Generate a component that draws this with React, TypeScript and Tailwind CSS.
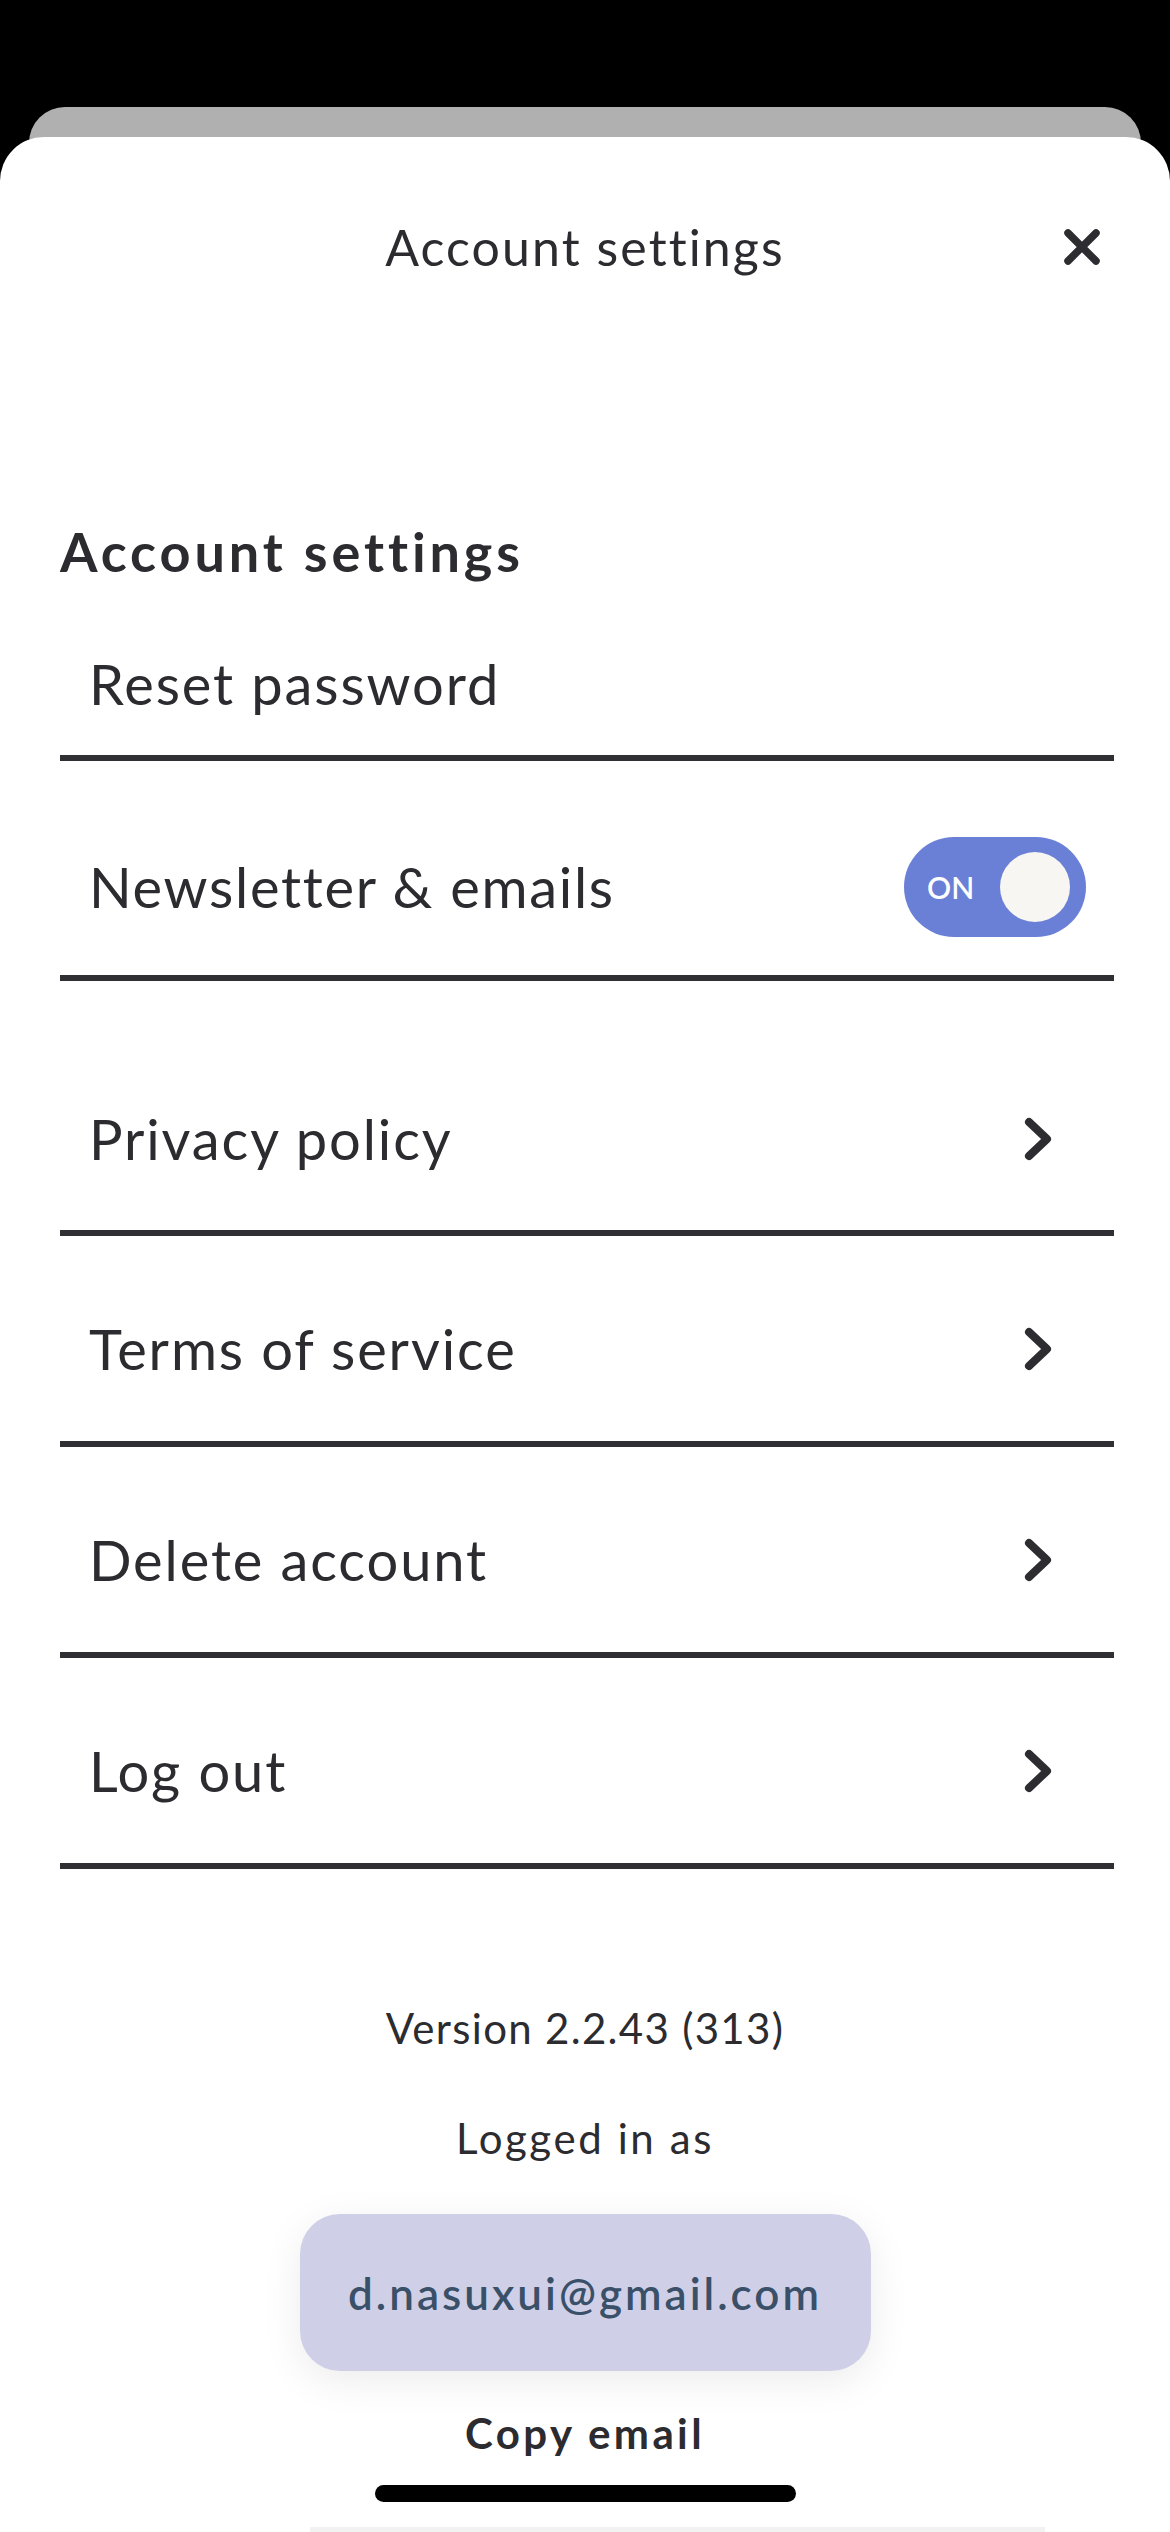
import React from "react";

function Chevron() {
  return (
    <svg width="28" height="44" viewBox="0 0 28 44" fill="none">
      <polyline
        points="5,5 23,22 5,39"
        stroke="#2c2c31"
        strokeWidth="8"
        strokeLinecap="round"
        strokeLinejoin="round"
      />
    </svg>
  );
}

function CloseIcon() {
  return (
    <svg width="40" height="40" viewBox="0 0 40 40" fill="none">
      <path d="M6 6 L34 34 M34 6 L6 34" stroke="#2c2c31" strokeWidth="7.5" strokeLinecap="round" />
    </svg>
  );
}

function Toggle() {
  return (
    <div className="flex h-[100px] w-[182px] items-center justify-between rounded-full bg-[#6a80d6] pl-[23px] pr-[16px]">
      <span className="text-[30px] font-semibold leading-none text-white">ON</span>
      <span className="h-[70px] w-[70px] rounded-full bg-[#f8f6f2]" />
    </div>
  );
}

function LinkRow({ label, first }: { label: string; first?: boolean }) {
  return (
    <div
      className={`flex items-center justify-between border-b-[6px] border-[#2f2f34] pl-[29px] pr-[62px] ${
        first ? "h-[255px] pt-[67px]" : "h-[211px] pt-[21px]"
      }`}>
      <span className="text-[56px] leading-none tracking-[1.9px]">{label}</span>
      <Chevron />
    </div>
  );
}

export default function App() {
  return (
    <div className="min-h-[2532px] bg-black font-['Lato',sans-serif] text-[#2b2b30]">
      <div className="h-[107px]" />
      <div className="mx-[29px] h-[60px] rounded-t-[36px] bg-[#b0b0b0]" />
      <div className="relative -mt-[30px] flex h-[2395px] flex-col rounded-t-[44px] bg-white">
        {/* header */}
        <div className="relative flex h-[220px] items-center justify-center">
          <span className="text-[50px] leading-none tracking-[2.1px]">Account settings</span>
          <button className="absolute right-[68px] top-[90px]">
            <CloseIcon />
          </button>
        </div>

        <div className="px-[56px] pl-[60px]">
          <h2 className="mt-[168px] text-[54px] font-bold leading-none tracking-[3.9px]">Account settings</h2>

          <div className="flex h-[182px] items-center border-b-[6px] border-[#2f2f34] pl-[29px] pt-[33px]">
            <span className="text-[56px] leading-none tracking-[1.9px]">Reset password</span>
          </div>

          <div className="flex h-[220px] items-center justify-between border-b-[6px] border-[#2f2f34] pl-[29px] pr-[28px] pt-[38px]">
            <span className="text-[56px] leading-none tracking-[1.7px]">Newsletter &amp; emails</span>
            <Toggle />
          </div>

          <LinkRow label="Privacy policy" first />
          <LinkRow label="Terms of service" />
          <LinkRow label="Delete account" />
          <LinkRow label="Log out" />
        </div>

        <div className="flex flex-col items-center">
          <p className="mt-[138px] text-[42px] leading-none tracking-[1.3px]">Version 2.2.43 (313)</p>
          <p className="mt-[68px] text-[42px] leading-none tracking-[2.6px]">Logged in as</p>
          <div className="mt-[55px] flex h-[157px] w-[571px] items-center justify-center rounded-[40px] bg-[#cfd0e8] shadow-[0_10px_40px_rgba(0,0,0,0.08)]">
            <span className="text-[44px] font-semibold leading-none tracking-[3px] text-[#3a5068]">
              d.nasuxui@gmail.com
            </span>
          </div>
          <button className="mt-[41px] text-[42px] font-bold leading-none tracking-[3.4px]">Copy email</button>
          <div className="mt-[31px] h-[17px] w-[421px] rounded-full bg-black" />
        </div>

        <div className="ml-[310px] mt-auto h-[5px] w-[735px] bg-[#f2f2f2]" />
      </div>
    </div>
  );
}
